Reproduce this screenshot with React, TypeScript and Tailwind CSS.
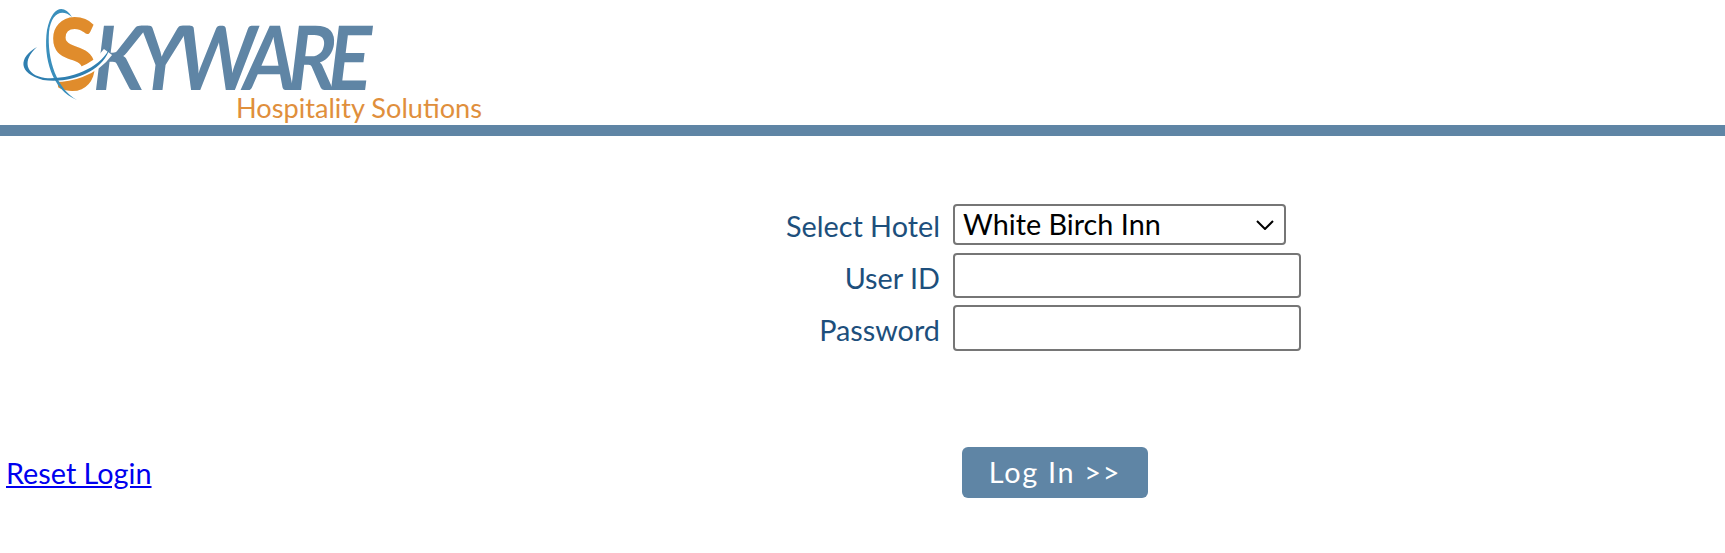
const Logo = () => (
  <svg width="500" height="125" viewBox="0 0 500 125" className="block">
    <text x="0" y="0" transform="translate(49 90) scale(0.88 1)" fontFamily="Lato" fontWeight="900" fontSize="100" fill="#e08c2c">
      S
    </text>
    <text x="0" y="0" transform="translate(90 90) skewX(-7) scale(0.84 1)" fontFamily="Lato" fontWeight="700" fontSize="89" fill="#5f85a5" textLength="331" lengthAdjust="spacing">
      KYWARE
    </text>
    <text x="236" y="118" fontFamily="Lato" fontSize="27" fill="#e08f3c" textLength="246" lengthAdjust="spacingAndGlyphs">
      Hospitality Solutions
    </text>
    {/* white gap where the swoosh cuts through the S */}
    <path d="M43 76 C70 80 95 70 108 52" fill="none" stroke="#fff" strokeWidth="10" />
    <path d="M40 60 L40 95 L59 95 L56 68 Z" fill="#fff" />
    {/* orbit lines */}
    <path d="M72 17 C64 4 52 6 47 30 C43 58 52 90 77 100 C57 89 47 60 49 32 C51 13 62 8 72 17 Z" fill="#3a8fbc" />
    <path d="M37 47 C18 58 18 73 43 80 C70 84 104 72 110 47 C102 67 72 80 45 78 C25 75 22 60 37 47 Z" fill="#2f7fb0" />
  </svg>
);

export default function App() {
  const labelCls = "text-right text-[#1d4f7c] text-[28.8px] leading-none";
  return (
    <div className="min-h-[553px] bg-white font-['Lato',sans-serif]">
      <header className="h-[125px]">
        <Logo />
      </header>
      <div className="h-[11px] bg-[#5f85a5]" />

      <div className="pt-[68px] grid grid-cols-[940px_348px] gap-x-[13px] items-center">
        <label className={labelCls + " pt-[4px]"}>Select Hotel</label>
        <div className="h-[41px] w-[333px] flex items-center justify-between rounded-[4px] border-2 border-[#767676] pl-[8px] pr-[10px] text-[28.8px] text-black">
          <span className="pt-[1px]">White Birch Inn</span>
          <svg width="18" height="10" viewBox="0 0 18 10" fill="none" stroke="#000" strokeWidth="2">
            <path d="M1 1l8 8 8-8" />
          </svg>
        </div>
        <label className={labelCls + " mt-[8px] pt-[5px]"}>User ID</label>
        <input className="mt-[8px] h-[45px] w-[348px] rounded-[4px] border-2 border-[#767676]" />
        <label className={labelCls + " mt-[7px] pt-[4px]"}>Password</label>
        <input type="password" className="mt-[7px] h-[46px] w-[348px] rounded-[4px] border-2 border-[#767676]" />
      </div>

      <div className="mt-[96px] flex items-center justify-between pl-[6px]">
        <a href="#" className="mt-[2px] text-[28.8px] text-[#0000ee] underline">Reset Login</a>
        <button className="mr-[577px] h-[51px] w-[186px] rounded-[6px] bg-[#5f85a5] text-[28.8px] tracking-[1.7px] text-white">
          Log In &gt;&gt;
        </button>
      </div>
    </div>
  );
}
